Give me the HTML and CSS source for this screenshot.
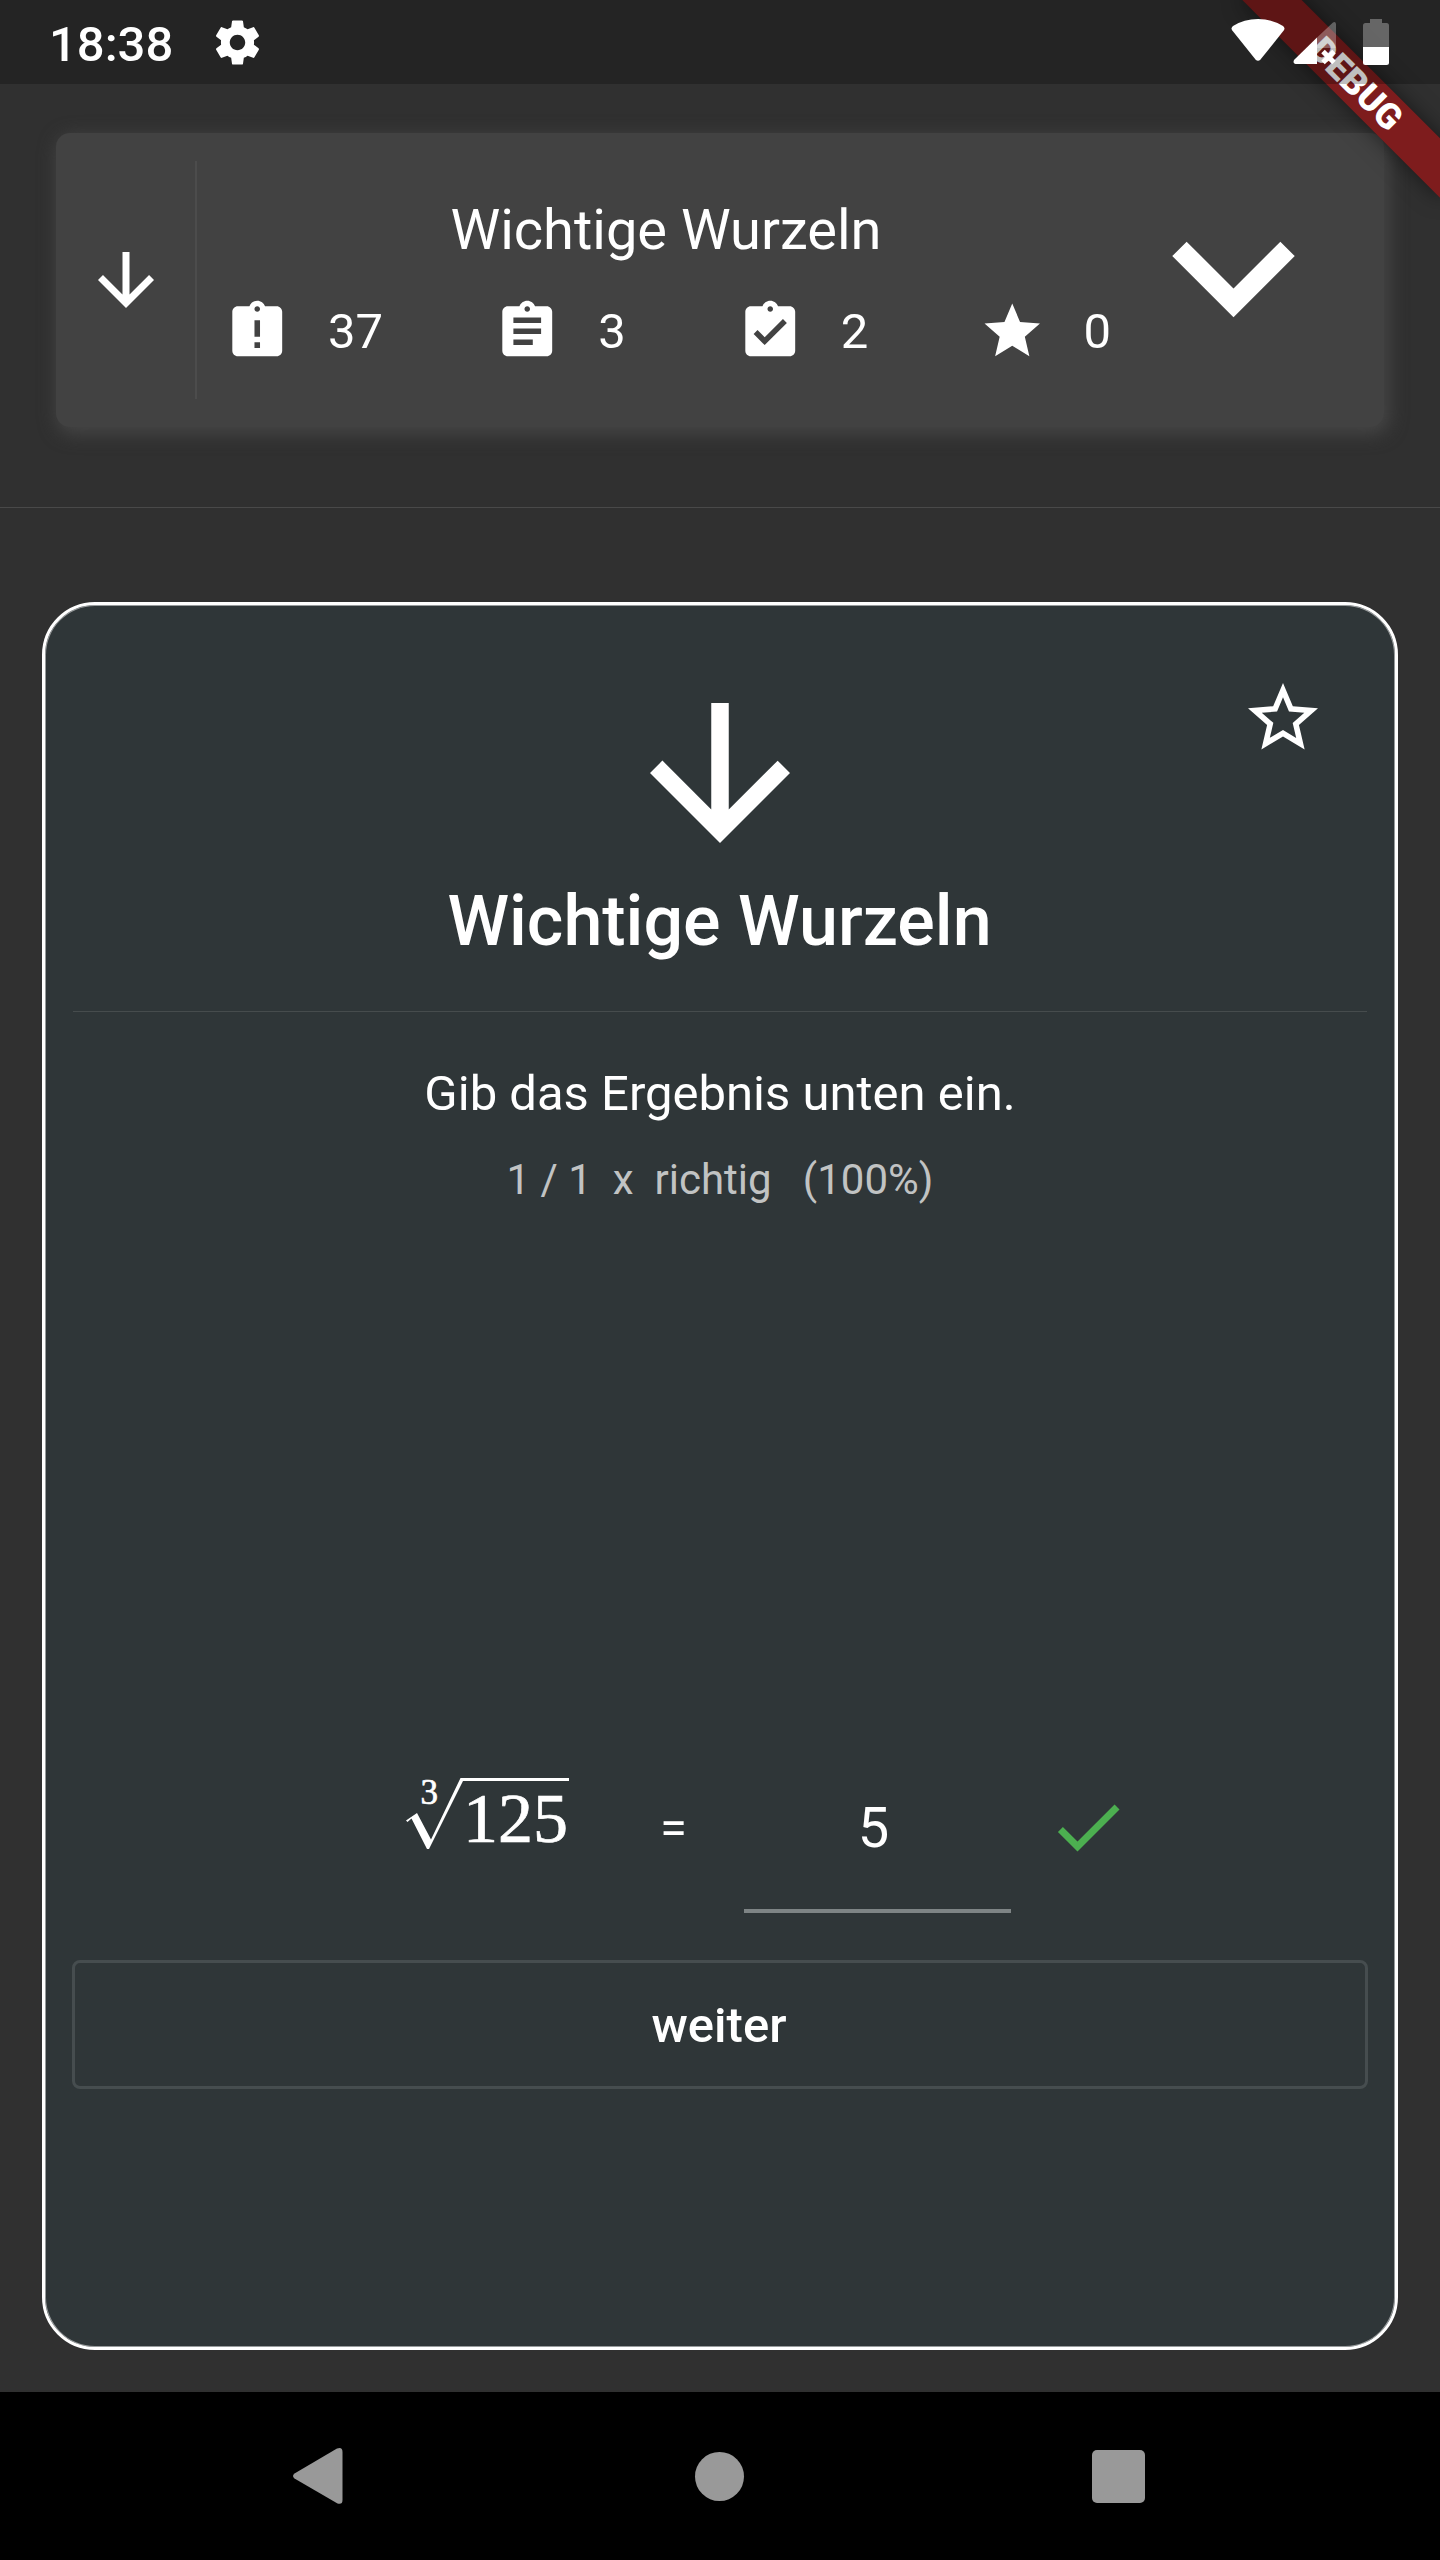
FILE: index.html
```html
<!DOCTYPE html>
<html lang="de">
<head>
<meta charset="utf-8">
<title>Wichtige Wurzeln</title>
<link rel="stylesheet" href="styles.css">
</head>
<body>
<div class="status-bar">
  <span class="time">18:38</span>
  <svg class="gear" viewBox="0 0 24 24"><path d="M19.43 12.98c.04-.32.07-.64.07-.98s-.03-.66-.07-.98l2.11-1.65c.19-.15.24-.42.12-.64l-2-3.46c-.12-.22-.39-.3-.61-.22l-2.49 1c-.52-.4-1.08-.73-1.69-.98l-.38-2.65C14.46 2.18 14.25 2 14 2h-4c-.25 0-.46.18-.49.42l-.38 2.65c-.61.25-1.17.59-1.69.98l-2.49-1c-.23-.09-.49 0-.61.22l-2 3.46c-.13.22-.07.49.12.64l2.11 1.65c-.04.32-.07.65-.07.98s.03.66.07.98l-2.11 1.65c-.19.15-.24.42-.12.64l2 3.46c.12.22.39.3.61.22l2.49-1c.52.4 1.08.73 1.69.98l.38 2.65c.03.24.24.42.49.42h4c.25 0 .46-.18.49-.42l.38-2.65c.61-.25 1.17-.59 1.69-.98l2.49 1c.23.09.49 0 .61-.22l2-3.46c.12-.22.07-.49-.12-.64l-2.11-1.65zM12 15.5c-1.93 0-3.5-1.57-3.5-3.5s1.57-3.5 3.5-3.5 3.5 1.57 3.5 3.5-1.57 3.5-3.5 3.5z"/></svg>
  <svg class="system-icons" viewBox="0 0 158 48">
    <path d="M.3 12.500Q-1.500 10 1 8Q12 1 26 1Q40 1 51 8Q53.500 10 51.700 12.500L28.500 41.500Q26 44 23.500 41.500Z"/>
    <path class="dim" d="M85 19.500L101 4.500Q103.500 3 104 6V30H85Z"/>
    <path d="M85 19.500V46H63.500Q60.500 45 62 42Z"/>
    <path class="cross" d="M91 33.500L102 44.500M102 33.500L91 44.500"/>
    <path class="dim" d="M131 29V7.500Q131 5 133.500 5H138V1H150V5H154.500Q157 5 157 7.500V29Z"/>
    <path d="M131 29H157V44.500Q157 47 154.500 47H133.500Q131 47 131 44.500Z"/>
  </svg>
</div>
<div class="debug-clip"><div class="debug-banner">DEBUG</div></div>

<header class="header">
  <section class="summary">
    <svg class="summary-arrow" viewBox="0 0 24 24"><path d="M20 12l-1.410-1.410L13 16.170V4h-2v12.170l-5.580-5.590L4 12l8 8 8-8z"/></svg>
    <div class="vertical-rule"></div>
    <div class="summary-body">
      <div class="summary-title">Wichtige Wurzeln</div>
      <div class="stats">
        <div class="stat"><svg viewBox="0 0 24 24"><path d="M19 3h-4.180C14.400 1.840 13.300 1 12 1c-1.300 0-2.400.84-2.820 2H5c-1.100 0-2 .9-2 2v14c0 1.100.9 2 2 2h14c1.100 0 2-.9 2-2V5c0-1.100-.9-2-2-2zm-6 15h-2v-2h2v2zm0-4h-2V8h2v6zm-1-9c-.55 0-1-.45-1-1s.45-1 1-1 1 .45 1 1-.45 1-1 1z"/></svg><span>37</span></div>
        <div class="stat"><svg viewBox="0 0 24 24"><path d="M19 3h-4.180C14.400 1.840 13.300 1 12 1c-1.300 0-2.400.84-2.820 2H5c-1.100 0-2 .9-2 2v14c0 1.100.9 2 2 2h14c1.100 0 2-.9 2-2V5c0-1.100-.9-2-2-2zm-7 0c.55 0 1 .45 1 1s-.45 1-1 1-1-.45-1-1 .45-1 1-1zm2 14H7v-2h7v2zm3-4H7v-2h10v2zm0-4H7V7h10v2z"/></svg><span>3</span></div>
        <div class="stat"><svg viewBox="0 0 24 24"><path d="M19 3h-4.180C14.400 1.840 13.300 1 12 1c-1.300 0-2.400.84-2.820 2H5c-1.100 0-2 .9-2 2v14c0 1.100.9 2 2 2h14c1.100 0 2-.9 2-2V5c0-1.100-.9-2-2-2zm-7 0c.55 0 1 .45 1 1s-.45 1-1 1-1-.45-1-1 .45-1 1-1zm-2 14l-4-4 1.410-1.410L10 14.170l6.590-6.590L18 9l-8 8z"/></svg><span>2</span></div>
        <div class="stat"><svg viewBox="0 0 24 24"><path d="M12 17.270L18.180 21l-1.640-7.030L22 9.240l-7.190-.61L12 2 9.190 8.630 2 9.240l5.460 4.730L5.820 21z"/></svg><span>0</span></div>
      </div>
    </div>
    <svg class="chevron" viewBox="0 0 24 24"><path d="M16.590 8.590L12 13.170 7.410 8.590 6 10l6 6 6-6z"/></svg>
  </section>
</header>

<main class="task">
  <svg class="favorite" viewBox="0 0 24 24"><path d="M22 9.240l-7.190-.62L12 2 9.190 8.630 2 9.240l5.460 4.730L5.820 21 12 17.270 18.180 21l-1.630-7.030L22 9.240zM12 15.400l-3.760 2.270 1-4.280-3.320-2.880 4.380-.38L12 6.100l1.710 4.040 4.380.38-3.320 2.880 1 4.280L12 15.400z"/></svg>
  <svg class="task-arrow" viewBox="0 0 24 24"><path d="M20 12l-1.410-1.410L13 16.170V4h-2v12.170l-5.580-5.590L4 12l8 8 8-8z"/></svg>
  <h1>Wichtige Wurzeln</h1>
  <hr>
  <p class="instruction">Gib das Ergebnis unten ein.</p>
  <p class="score">1 / 1  x  richtig   (100%)</p>
  <div class="answer">
    <svg class="radical" viewBox="0 0 165 80">
      <path d="M1 45.500L12 38L26 64.500L55.500 3H164V6H58L24 74H22L6.500 43.500L2.500 47Z"/>
      <text class="index" x="15.500" y="28.500">3</text>
      <text class="radicand" x="58" y="67">125</text>
    </svg>
    <span class="equals">=</span>
    <div class="input">5</div>
    <svg class="check" viewBox="0 0 24 24"><path d="M9 16.170L4.830 12l-1.420 1.410L9 19 21 7l-1.410-1.410z"/></svg>
  </div>
  <button class="next">weiter</button>
</main>

<nav class="nav-bar">
  <svg viewBox="0 0 52 58"><path d="M2.500 26.500L45 1.500Q50.500-.5 50.500 5V53Q50.500 58 45.500 56.500L2.500 31.500Q-.5 29 2.500 26.500Z"/></svg>
  <div class="home"></div>
  <div class="recent"></div>
</nav>
</body>
</html>
```

FILE: styles.css
```css
* { box-sizing: border-box; }
body {
  margin: 0;
  width: 1440px;
  height: 2560px;
  position: relative;
  overflow: hidden;
  display: flex;
  flex-direction: column;
  background: #303030;
  color: #fff;
  font-family: Roboto, "Liberation Sans", sans-serif;
}
svg { display: block; flex: none; fill: #fff; }

.status-bar {
  position: relative;
  z-index: 2;
  flex: none;
  height: 84px;
  padding-left: 49px;
  display: flex;
  align-items: flex-start;
  background: rgba(0, 0, 0, .25);
}
.time {
  width: 162px;
  margin-top: 20px;
  font-size: 49px;
  line-height: 50px;
  font-weight: 500;
}
.gear { width: 53px; height: 53px; margin-top: 16px; }
.system-icons {
  width: 158px;
  height: 48px;
  margin: 18px 50px 0 auto;
  overflow: visible;
}
.dim { fill: rgba(255, 255, 255, .3); }
.cross { fill: none; stroke: #fff; stroke-width: 5; }

.debug-clip {
  position: absolute;
  z-index: 1;
  top: 0;
  right: 0;
  width: 260px;
  height: 260px;
  overflow: hidden;
}
.debug-banner {
  position: absolute;
  left: 36px;
  top: 63px;
  width: 280px;
  height: 42px;
  transform: rotate(45deg);
  background: #7e1c1d;
  box-shadow: 0 0 21px rgba(0, 0, 0, .5);
  font-size: 35.7px;
  line-height: 42px;
  font-weight: 900;
  text-align: center;
}

.header {
  flex: none;
  height: 424px;
  padding: 49px 56px 0;
  border-bottom: 1px solid #494949;
}
.summary {
  height: 294px;
  padding: 0 28px;
  display: flex;
  align-items: center;
  background: #424242;
  border-radius: 14px;
  box-shadow: 3px 5px 18px 2px #464646;
}
.summary-arrow { width: 84px; height: 84px; }
.vertical-rule {
  flex: none;
  width: 2px;
  height: 238px;
  margin: 0 27px;
  background: #4c4c4c;
}
.summary-body { width: 887px; height: 166px; flex: none; }
.summary-title {
  padding-right: 3px;
  font-size: 56px;
  line-height: 66px;
  text-align: center;
}
.stats {
  margin-top: 35px;
  display: flex;
  justify-content: space-between;
}
.stat {
  display: flex;
  align-items: center;
  gap: 37.5px;
  font-size: 49px;
  line-height: 66px;
}
.stat svg { width: 66.5px; height: 66.5px; }
.stat span { padding-top: 1px; }
.chevron { width: 245px; height: 245px; margin-top: -8px; }

.task {
  position: relative;
  flex: none;
  width: 1356px;
  height: 1748px;
  margin: 94px 42px 42px;
  padding: 63px 27px 0;
  display: flex;
  flex-direction: column;
  align-items: center;
  background: #2f3638;
  border: 3px solid #fff;
  border-radius: 53px;
  box-shadow: inset 0 0 0 1px rgba(255, 255, 255, .5);
}
.favorite {
  position: absolute;
  right: 70px;
  top: 71px;
  width: 84px;
  height: 84px;
}
.task-arrow { width: 210px; height: 210px; }
h1 {
  margin: 2px 1px 0 0;
  font-size: 70px;
  line-height: 82px;
  font-weight: 500;
}
hr {
  width: 1294px;
  height: 1px;
  margin: 49px 0 0;
  border: 0;
  background: #464c4d;
}
p { margin: 0; white-space: pre; }
.instruction {
  margin-top: 53px;
  font-size: 49px;
  line-height: 58px;
}
.score {
  margin-top: 32px;
  font-size: 42px;
  line-height: 50px;
  color: #c1c3c3;
}
.answer {
  align-self: stretch;
  height: 138px;
  margin-top: 570px;
  padding-left: 333px;
  display: flex;
  align-items: flex-start;
}
.radical { width: 165px; height: 80px; overflow: visible; }
.radical text {
  font-family: "Liberation Serif", serif;
  stroke: #fff;
  stroke-width: .7px;
}
.index { font-size: 35px; }
.radicand { font-size: 70px; }
.equals {
  width: 84px;
  margin: 24px 0 0 90px;
  font-size: 49px;
  line-height: 58px;
}
.input {
  width: 267px;
  height: 138px;
  padding: 20px 8px 0 0;
  border-bottom: 4px solid #7e8485;
  font-size: 56px;
  line-height: 66px;
  text-align: center;
}
.check { width: 84px; height: 84px; margin: 10px 0 0 35px; fill: #4caf50; }
.next {
  align-self: stretch;
  height: 129px;
  margin-top: 47px;
  padding: 2px 2px 0 0;
  color: #fff;
  background: none;
  border: 3px solid #464d4f;
  border-radius: 8px;
  font: 500 49px/60px Roboto, "Liberation Sans", sans-serif;
}

.nav-bar {
  flex: none;
  height: 168px;
  padding: 0 295px 0 292px;
  display: flex;
  align-items: center;
  justify-content: space-between;
  background: #000;
}
.nav-bar svg { width: 52px; height: 58px; fill: #999; }
.home { width: 49px; height: 49px; margin-left: 2px; border-radius: 50%; background: #999; }
.recent { width: 53px; height: 53px; border-radius: 5px; background: #999; }
```
